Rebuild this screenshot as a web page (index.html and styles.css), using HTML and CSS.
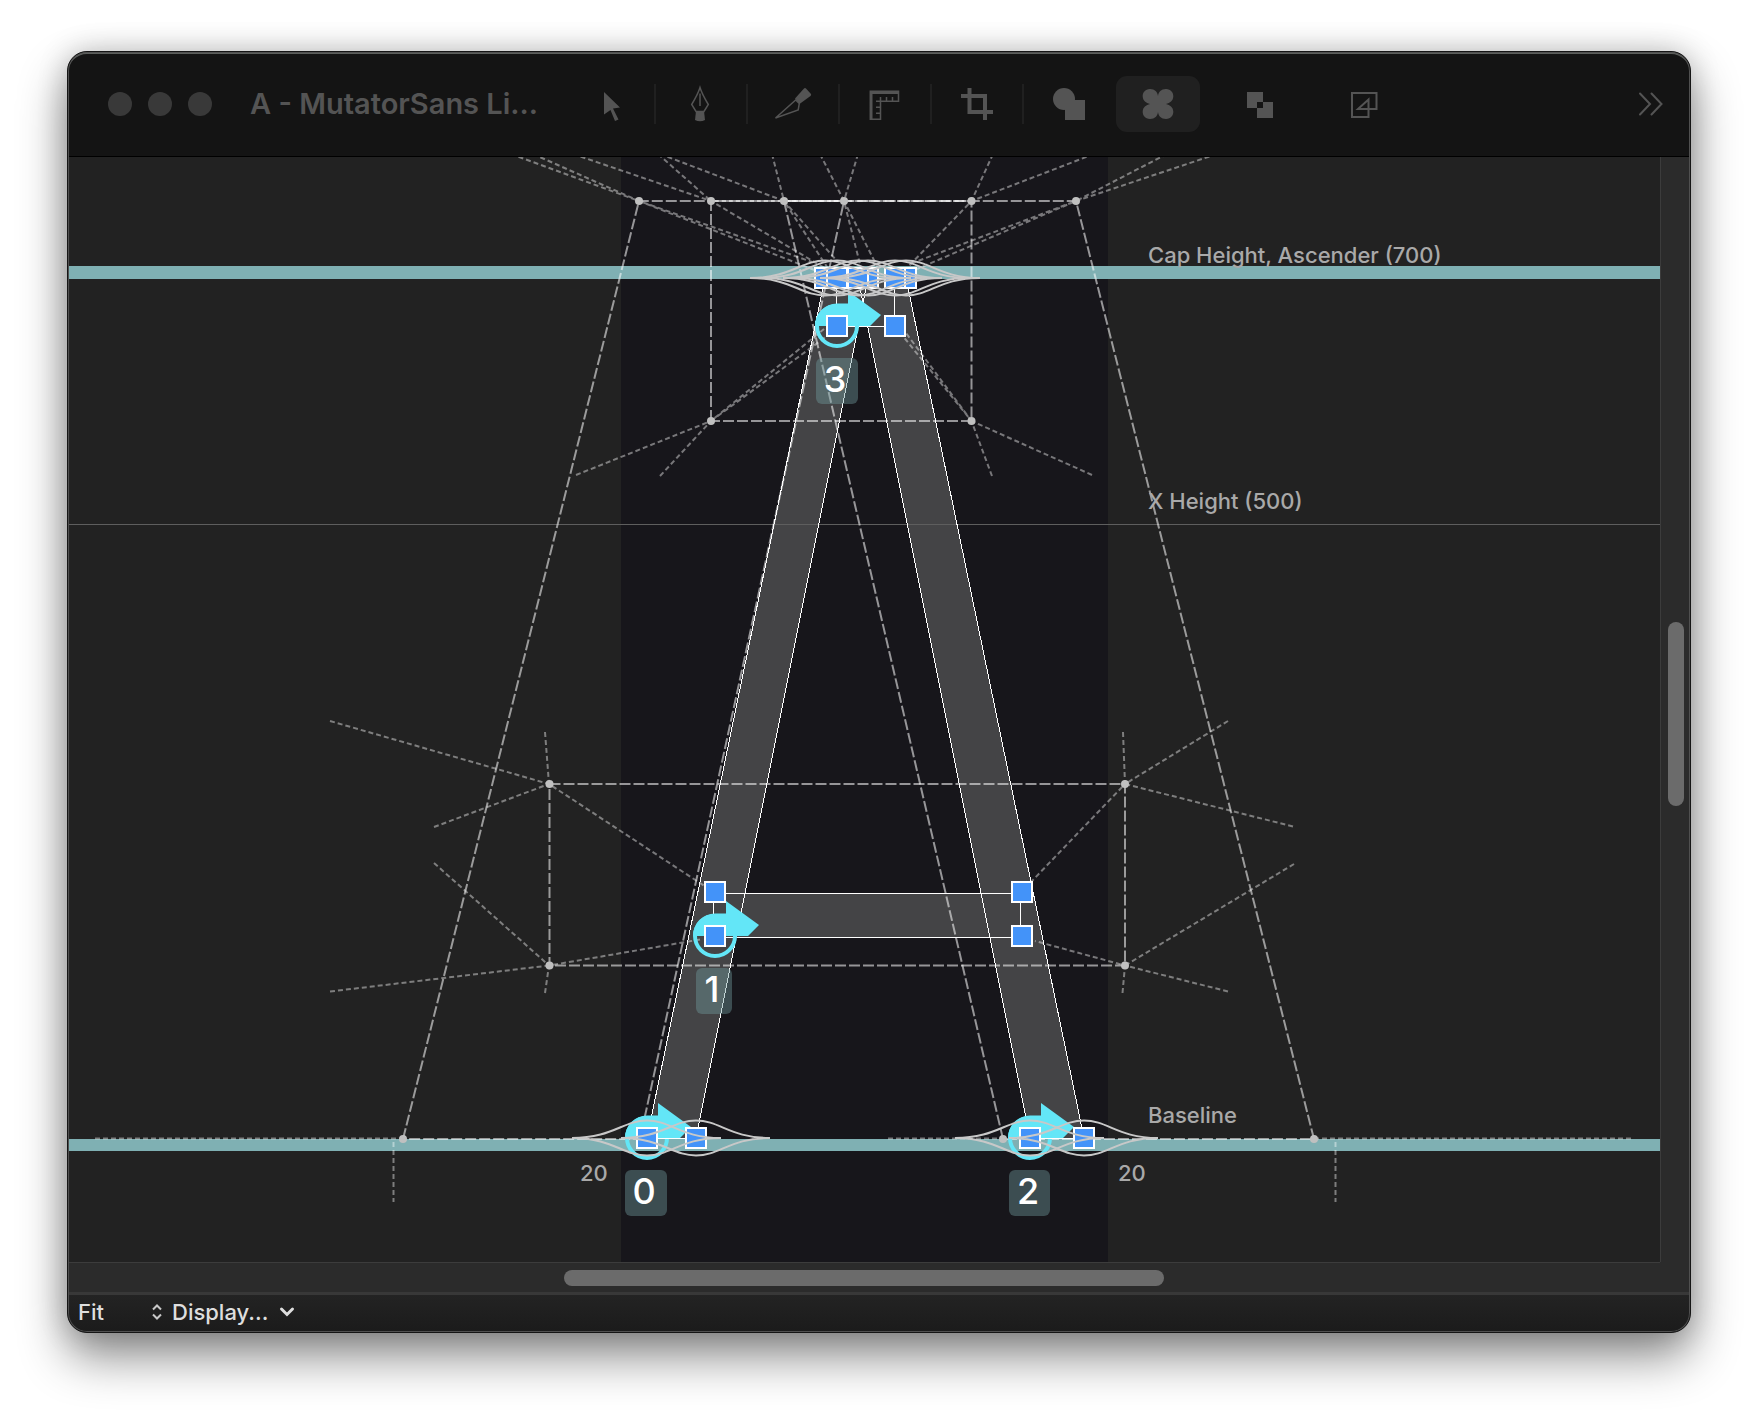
FILE: index.html
```html
<!DOCTYPE html>
<html lang="en">
<head>
<meta charset="utf-8">
<title>A - MutatorSans Light</title>
<link rel="stylesheet" href="styles.css">
</head>
<body>
<main class="window">
  <header class="titlebar">
    <div class="lights"><span class="light"></span><span class="light"></span><span class="light"></span></div>
    <h1 class="title">A - MutatorSans Li...</h1>
    <nav class="tools" aria-label="Tools">
      <button class="tool" aria-label="Edit"><svg viewBox="0 0 84 56"><path class="solid" d="M37 16L53 31.500L46 32.500L51.500 43.500L48 45L43.500 34L37 38.500Z"/></svg></button>
      <span class="divider"></span>
      <button class="tool" aria-label="Pen"><svg viewBox="0 0 84 56"><path class="line" d="M41 11.500C43 18 46 23 49.300 28.500L45 35.500H37L32.700 28.500C36 23 39 18 41 11.500ZM41 17.500V30"/><path class="solid" d="M37 35H45L46 44Q41 46.500 36 44Z"/></svg></button>
      <span class="divider"></span>
      <button class="tool" aria-label="Knife"><svg viewBox="0 0 84 56"><path class="line" d="M24.500 42L44.700 24L48.300 27.500L47.200 34Z"/><path class="solid" d="M44 22.500L53 12.500Q54 11.500 55 12.500L60 18Q60.500 19 59.500 20L48.500 28Z"/></svg></button>
      <span class="divider"></span>
      <button class="tool" aria-label="Measure"><svg viewBox="0 0 84 56"><path class="line" d="M27.300 15.300H55.500V25.300H37.500V43.300H27.300ZM37.500 25.300V21M43.500 25V21M49.500 25V21M37.500 25.300H33M37.500 31.300H33M37.500 37.300H33"/><path class="solid" d="M27 15H56V18H29.500V44H27Z"/></svg></button>
      <span class="divider"></span>
      <button class="tool" aria-label="Crop"><svg viewBox="0 0 84 56"><path class="heavy" d="M34.500 12V36H58M26 20H50V44"/></svg></button>
      <span class="divider"></span>
      <button class="tool" aria-label="Shapes"><svg viewBox="0 0 84 56"><circle class="solid" cx="37" cy="23" r="11"/><path class="solid" d="M38 24H58V44H38Z"/></svg></button>
    </nav>
    <nav class="tools extra" aria-label="Extensions">
      <button class="tool active" aria-label="Variable groups"><svg viewBox="0 0 84 56"><path class="solid" d="M42 20C42.500 16 45 13 50 13C55 13 57.500 17 57.300 20.500C57 25 54 27 50 28C54 29 57 31 57.300 35.500C57.500 39 55 43 50 43C45 43 42.500 40 42 36C41.500 40 39 43 34 43C29 43 26.500 39 26.700 35.500C27 31 30 29 34 28C30 27 27 25 26.700 20.500C26.500 17 29 13 34 13C39 13 41.500 16 42 20Z"/></svg></button>
      <button class="tool" aria-label="Overlap"><svg viewBox="0 0 84 56"><path class="solid" fill-rule="evenodd" d="M28 16H44V32H28ZM38 26H54V42H38Z"/></svg></button>
      <button class="tool" aria-label="Contour order"><svg viewBox="0 0 84 56"><path class="outline" d="M54.500 17H30V41H46.500V23.500L36 33H54.500Z"/></svg></button>
    </nav>
    <button class="more" aria-label="More"><svg viewBox="0 0 26 24"><path class="chevrons" d="M2 1.500L12 12L2 22.500M13.500 1.500L23.500 12L13.500 22.500"/></svg></button>
  </header>

  <section class="editor">
    <svg class="canvas" viewBox="68 157 1592 1105" preserveAspectRatio="xMidYMid slice" role="img" aria-label="Glyph A">
      <defs>
        <g id="node"><rect class="node" x="-10" y="-10" width="20" height="20"/></g>
        <g id="start">
          <path class="start-fill" d="M-22 0A22 22 0 0 1 0-22.500H11V-35L44-11L33 0Z"/>
          <circle class="start-ring" r="20"/>
        </g>
        <path id="bell" class="bell" d="M-75 0C-34 0-24-17.500 0-17.500S34 0 74 0M-75 0C-34 0-24 17.500 0 17.500S34 0 74 0"/>
      </defs>
      <rect class="advance" x="621" y="157" width="487" height="1106"/>
      <path class="glyph" d="M647 1138L825 278H868L696 1138ZM1030 1138L858 278H906L1084 1138ZM714 893H1021V937H714ZM837 278H895V327H837Z"/>
      <rect class="zone" x="68" y="266" width="1593" height="13"/>
      <rect class="zone" x="68" y="1139" width="1593" height="12"/>
      <path class="metric" d="M68 524.500H1661"/>
      <path class="edge" d="M647 1138L825 278H868L696 1138ZM1030 1138L858 278H906L1084 1138ZM713.500 893.500H1020.500V937.500H713.500ZM836.500 278V326.500H894.500V278"/>

      <g class="master">
        <path d="M403 1139L639 201H844L640 1139Z"/>
        <path d="M1003 1139L784 201H1076L1314 1139Z"/>
        <path d="M711 421V201H971.500V421Z"/>
        <path d="M549.500 784H1125V965.500H549.500Z"/>
      </g>
      <g class="delta">
        <path d="M330 721L549 784M434 827L549 784M545 732L549 784L706 887"/>
        <path d="M434 863L549 965.500M330 991.500L549 965.500M545 993L549 965.500L703 939"/>
        <path d="M1228 721L1125 784M1293 826.500L1125 784M1123 732L1125 784L1031 882"/>
        <path d="M1294 864L1125 965.500M1228 991.500L1125 965.500M1122.500 993L1125 965.500L1035 941"/>
        <path d="M576 475L711 421M660 476L711 421L824 329M711 421L827 336"/>
        <path d="M1092 475L971.500 421M992 476L971.500 421L902 335M971.500 421L906 333"/>
        <path d="M511 154L639 201L817 271M533 154L639 201L812 262"/>
        <path d="M573 154L711 201L828 270M658 154L711 201"/>
        <path d="M660 154L784 201L829 270M772 154L784 201L845 270"/>
        <path d="M820 154L844 201L861 268M858 154L844 201L878 268"/>
        <path d="M993 154L971.500 201L905 270M1094 154L971.500 201H784"/>
        <path d="M1167 154L1076 201L917 269M1217 154L1076 201L910 264"/>
        <path d="M95 1138.500H403M888 1138.500H1003M1314 1138.500H1631M393.500 1142V1202M1335.500 1142V1202"/>
      </g>
      <g class="dots">
        <circle cx="639" cy="201" r="4"/><circle cx="711" cy="201" r="4"/><circle cx="784" cy="201" r="4"/><circle cx="844" cy="201" r="4"/><circle cx="971.500" cy="201" r="4"/><circle cx="1076" cy="201" r="4"/>
        <circle cx="711" cy="421" r="4"/><circle cx="971.500" cy="421" r="4"/>
        <circle cx="549.500" cy="784" r="4"/><circle cx="1125" cy="784" r="4"/><circle cx="549.500" cy="965.500" r="4"/><circle cx="1125" cy="965.500" r="4"/>
        <circle cx="403" cy="1139" r="4"/><circle cx="1003" cy="1139" r="4"/><circle cx="1314" cy="1139" r="4"/>
      </g>

      <use href="#start" x="647" y="1138"/><use href="#start" x="715" y="936"/><use href="#start" x="1030" y="1138"/><use href="#start" x="837" y="326"/>
      <path class="edge" d="M647 1138.500H696M1030 1138.500H1084"/>
      <use href="#node" x="825" y="278"/><use href="#node" x="868" y="278"/><use href="#node" x="858" y="278"/><use href="#node" x="906" y="278"/><use href="#node" x="837" y="278"/><use href="#node" x="895" y="278"/>
      <use href="#node" x="837" y="326"/><use href="#node" x="895" y="326"/>
      <use href="#node" x="715" y="892"/><use href="#node" x="1022" y="892"/><use href="#node" x="715" y="936"/><use href="#node" x="1022" y="936"/>
      <use href="#node" x="647" y="1138"/><use href="#node" x="696" y="1138"/><use href="#node" x="1030" y="1138"/><use href="#node" x="1084" y="1138"/>
      <use href="#bell" x="825" y="278"/><use href="#bell" x="837" y="278"/><use href="#bell" x="858" y="278"/><use href="#bell" x="868" y="278"/><use href="#bell" x="895" y="278"/><use href="#bell" x="906" y="278"/>
      <use href="#bell" x="647" y="1138"/><use href="#bell" x="696" y="1138"/><use href="#bell" x="1030" y="1138"/><use href="#bell" x="1084" y="1138"/>

      <g class="badge"><rect x="816" y="358" width="42" height="46" rx="6"/><text x="835" y="392">3</text></g>
      <g class="badge"><rect x="696" y="968" width="36" height="46" rx="6"/><text x="712" y="1002">1</text></g>
      <g class="badge"><rect x="625" y="1170" width="42" height="46" rx="6"/><text x="644" y="1204">0</text></g>
      <g class="badge"><rect x="1009" y="1170" width="41" height="46" rx="6"/><text x="1028" y="1204">2</text></g>
      <g class="label">
        <text x="1148" y="263">Cap Height, Ascender (700)</text>
        <text x="1148" y="509">X Height (500)</text>
        <text x="1148" y="1123">Baseline</text>
        <text x="580" y="1181">20</text>
        <text x="1118" y="1181">20</text>
      </g>
    </svg>
    <div class="track vertical"><span class="thumb"></span></div>
    <div class="track horizontal"><span class="thumb"></span></div>
  </section>

  <footer class="status">
    <label class="picker zoom">
      <select aria-label="Zoom"><option>Fit</option></select>
      <svg class="arrows" viewBox="0 0 12 16"><path d="M2 5.500L6 1.500L10 5.500M2 10.500L6 14.500L10 10.500"/></svg>
    </label>
    <label class="picker display">
      <select aria-label="Display"><option>Display...</option></select>
      <svg class="caret" viewBox="0 0 16 12"><path d="M2.500 3L8 8.500L13.500 3"/></svg>
    </label>
  </footer>
</main>
</body>
</html>
```
FILE: styles.css
```css
* { box-sizing: border-box; }

body {
  margin: 0;
  min-height: 100vh;
  padding: 51px 67px 83px;
  display: grid;
  background: #fff;
  font-family: Inter, "Liberation Sans", sans-serif;
}

.window {
  position: relative;
  display: grid;
  grid-template-rows: auto 1fr auto;
  min-width: 0;
  border: 1px solid #151515;
  border-radius: 20px;
  overflow: hidden;
  background: #222;
  box-shadow: 0 24px 48px rgba(0, 0, 0, .45), 0 0 30px rgba(0, 0, 0, .2);
}

/* bevel that runs round the inside of the frame */
.window::after {
  content: "";
  position: absolute;
  inset: 0;
  border-radius: 19px;
  box-shadow: inset 0 0 0 1px #505050, inset 0 2px 0 #5c5f5c;
  pointer-events: none;
}

.titlebar {
  display: flex;
  align-items: center;
  height: 105px;
  padding: 0 26px 0 40px;
  background: #141414;
  border-bottom: 1px solid #000;
}

.lights { display: flex; gap: 16px; }
.light { width: 24px; height: 24px; border-radius: 50%; background: #393939; }

.title {
  width: 317px;
  margin: 0 0 0 38px;
  font-size: 29px;
  line-height: 36px;
  font-weight: 600;
  color: #545454;
  white-space: nowrap;
}

.tools { display: flex; align-items: center; gap: 3px; }
.extra { gap: 19px; margin-left: 5px; }
.divider { width: 2px; height: 40px; background: #202020; }

.tool, .more {
  padding: 0;
  border: 0;
  background: none;
}
.tool { width: 84px; height: 56px; border-radius: 11px; }
.tool.active { background: #202020; }
.tool svg, .more svg { display: block; width: 100%; height: 100%; }
.more { width: 26px; height: 24px; margin-left: auto; }

.solid { fill: #545454; }
.line, .heavy, .outline, .chevrons { fill: none; stroke: #545454; }
.line { stroke-width: 1.500; }
.outline { stroke-width: 2; }
.heavy { stroke-width: 4; }
.chevrons { stroke-width: 2; stroke-linecap: round; }

.editor {
  display: grid;
  grid-template-columns: 1fr 30px;
  grid-template-rows: 1fr 30px;
  min-height: 0;
  background: #2b2b2b;
}
.canvas { display: block; width: 100%; height: 100%; min-height: 0; background: #222; }

.track { display: grid; }
.vertical {
  grid-template-rows: 465fr 184fr 456fr;
  padding: 0 6px 0 7px;
  border-left: 1px solid #3c3c3c;
}
.vertical .thumb { grid-row: 2; }
.horizontal {
  grid-template-columns: 496fr 600fr 496fr;
  padding: 7px 0 6px;
  border-top: 1px solid #3c3c3c;
}
.horizontal .thumb { grid-column: 2; }
.thumb { border-radius: 8px; background: #6b6b6b; }

.advance { fill: #17161b; }
.glyph { fill: #444446; }
.zone { fill: #7fb0b3; }
.metric { stroke: #5e5e5e; }
.edge { fill: none; stroke: #fff; shape-rendering: crispEdges; }
.master { fill: none; stroke: #fff; stroke-opacity: .55; stroke-width: 2; stroke-dasharray: 11 3; }
.delta { fill: none; stroke: #fff; stroke-opacity: .42; stroke-width: 2; stroke-dasharray: 5 3; }
.dots { fill: #c0c0c0; }
.start-fill { fill: #63e6f7; }
.start-ring { fill: none; stroke: #63e6f7; stroke-width: 4; }
.node { fill: #4393f9; stroke: #fff; stroke-width: 2; }
.bell { fill: none; stroke: #c8c8c8; stroke-width: 2; }
.badge rect { fill: rgba(111, 155, 158, .42); }
.badge text { fill: #fff; font-size: 36px; font-weight: 500; text-anchor: middle; }
.label { fill: #a9a9a9; font-size: 22px; font-weight: 500; }

.status {
  display: flex;
  gap: 9px;
  height: 40px;
  padding: 0 10px 3px;
  align-items: center;
  border-top: 3px solid #383838;
  background: linear-gradient(#232323, #1b1b1b);
}
.picker { display: flex; align-items: center; }
.picker select {
  appearance: none;
  padding: 0;
  border: 0;
  background: none;
  color: #dedede;
  font: 500 22px/28px Inter, "Liberation Sans", sans-serif;
}
.zoom select { width: 73px; }
.display { gap: 10px; }
.picker svg { fill: none; stroke: #c8c8c8; stroke-width: 2; pointer-events: none; }
.arrows { width: 12px; height: 16px; }
.picker .caret { width: 16px; height: 12px; stroke: #dedede; stroke-width: 3; stroke-linecap: round; }
```
